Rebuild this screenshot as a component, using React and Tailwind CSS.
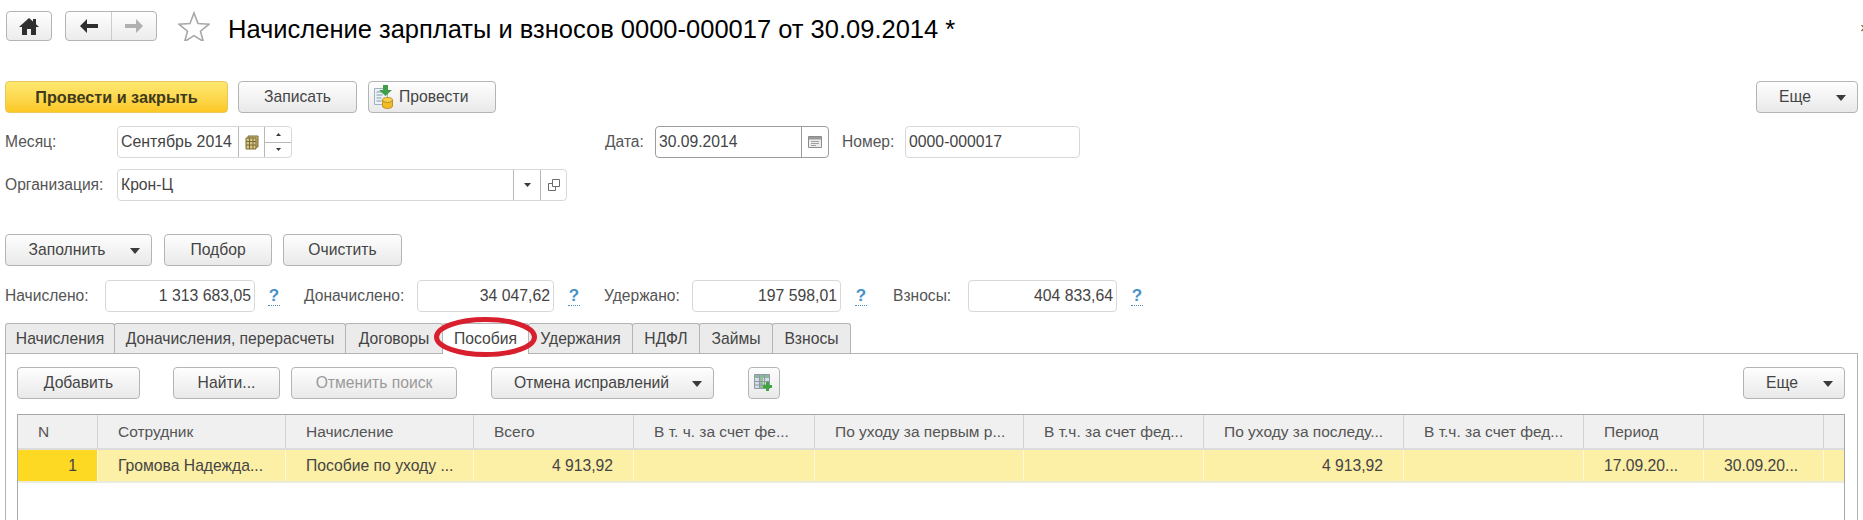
const textFont = "font-['Liberation_Sans',Arial,sans-serif]";

function Btn({ w, children, disabled, className = '' }) {
    return (
        <div
            className={
                'h-[32px] flex items-center justify-center shrink-0 rounded-[4px] border border-[#b4b4b4] bg-gradient-to-b from-[#fefefe] to-[#e9e9e9] text-[15.7px] ' +
                (disabled ? 'text-[#9a9a9a] ' : 'text-[#444444] ') +
                className
            }
            style={{ width: w }}
        >
            {children}
        </div>
    );
}

function Caret({ className = '' }) {
    return (
        <svg width="10" height="6" viewBox="0 0 10 6" className={className}>
            <path d="M0 0h10L5 6z" fill="#3a3a3a" />
        </svg>
    );
}

function MenuBtn({ w, label, textWidth }) {
    return (
        <Btn w={w} className="relative">
            <span style={{ marginRight: textWidth }}>{label}</span>
            <Caret className="absolute right-[11px] top-[13px]" />
        </Btn>
    );
}

function Label({ w, children }) {
    return (
        <div className="shrink-0 text-[15.6px] text-[#555555]" style={{ width: w }}>
            {children}
        </div>
    );
}

function Field({ w, children, right }) {
    return (
        <div
            className="h-[32px] flex items-center shrink-0 rounded-[4px] bg-white text-[15.8px] text-[#444444] border border-[#d8d8d8]"
            style={{ width: w }}
        >
            <div className={'flex-1 min-w-0 ' + (right ? 'text-right pr-[3px]' : 'pl-[3px]')}>{children}</div>
        </div>
    );
}

function FieldPart({ w, children, dark }) {
    return (
        <div
            className={'h-full flex items-center justify-center shrink-0 border-l ' + (dark ? 'border-[#9c9c9c]' : 'border-[#b8b8b8]')}
            style={{ width: w }}
        >
            {children}
        </div>
    );
}

function Help({ ml }) {
    return (
        <span
            className="shrink-0 w-[12px] text-center text-[17px] leading-[18px] font-bold text-[#4a90c8] border-b border-dotted border-[#4a90c8]"
            style={{ marginLeft: ml }}
        >
            ?
        </span>
    );
}

const tabs = [
    ['Начисления', 109],
    ['Доначисления, перерасчеты', 231],
    ['Договоры', 97],
    ['Пособия', 86],
    ['Удержания', 104],
    ['НДФЛ', 67],
    ['Займы', 73],
    ['Взносы', 78],
];

const columns = [
    { w: 80, title: 'N', value: '1', right: true },
    { w: 188, title: 'Сотрудник', value: 'Громова Надежда...' },
    { w: 188, title: 'Начисление', value: 'Пособие по уходу ...' },
    { w: 160, title: 'Всего', value: '4 913,92', right: true },
    { w: 181, title: 'В т. ч. за счет фе...' },
    { w: 209, title: 'По уходу за первым р...' },
    { w: 180, title: 'В т.ч. за счет фед...' },
    { w: 200, title: 'По уходу за последу...', value: '4 913,92', right: true },
    { w: 180, title: 'В т.ч. за счет фед...' },
    { w: 120, title: 'Период', value: '17.09.20...' },
    { w: 120, title: '', value: '30.09.20...' },
    { w: 22, title: 'Д', value: '' },
];

export default function App() {
    return (
        <div className={'relative w-[1863px] h-[520px] overflow-hidden bg-white ' + textFont}>
            {/* header */}
            <div className="flex items-start h-[81px] pl-[6px] pt-[11px]">
                <div className="w-[46px] h-[30px] flex items-center justify-center rounded-[4px] border border-[#b4b4b4] bg-gradient-to-b from-[#fefefe] to-[#ececec]">
                    <svg width="20" height="17" viewBox="0 0 20 17">
                        <path d="M10 0L0 9h3v8h5v-6h4v6h5V9h3l-3-2.7V1h-3v2.6z" fill="#2f2f2f" />
                    </svg>
                </div>
                <div className="ml-[13px] w-[92px] h-[30px] flex rounded-[4px] border border-[#b4b4b4] bg-gradient-to-b from-[#fefefe] to-[#ececec]">
                    <div className="w-[46px] flex items-center justify-center border-r border-[#cccccc]">
                        <svg width="18" height="14" viewBox="0 0 18 14">
                            <path d="M0 7l7-7v5h11v4H7v5z" fill="#2f2f2f" />
                        </svg>
                    </div>
                    <div className="flex-1 flex items-center justify-center">
                        <svg width="18" height="14" viewBox="0 0 18 14">
                            <path d="M18 7l-7-7v5H0v4h11v5z" fill="#b0b0b0" />
                        </svg>
                    </div>
                </div>
                <svg width="32" height="30" viewBox="0 0 32 30" className="ml-[21px]">
                    <path d="M16 2l4 10.5 11 .7-8.5 7 2.8 10.300L16 24.600 6.700 30.500l2.800-10.300-8.500-7 11-.7z" fill="#ffffff" stroke="#a8a8a8" strokeWidth="1.600" />
                </svg>
                <div className="ml-[18px] mt-[4px] text-[25.500px] leading-[28px] text-black whitespace-nowrap">
                    Начисление зарплаты и взносов 0000-000017 от 30.09.2014 *
                </div>
                <div className="ml-auto mt-[6px] w-[3px] overflow-hidden text-[15px] text-[#555555]">×</div>
            </div>

            {/* command bar */}
            <div className="flex items-center pl-[5px] pr-[5px]">
                <div className="w-[223px] h-[32px] flex items-center justify-center rounded-[4px] border border-[#e9c75a] bg-gradient-to-b from-[#fde96f] to-[#fcc821] text-[16.200px] font-bold text-[#3e3a1c]">
                    Провести и закрыть
                </div>
                <Btn w={119} className="ml-[10px]">Записать</Btn>
                <Btn w={128} className="ml-[11px] !justify-start pl-[5px] gap-[6px]">
                    <svg width="19" height="24" viewBox="0 0 19 24">
                        <path d="M.5 3.500h13v16H.5z" fill="#eef2f5" stroke="#9fb2c2" />
                        <path d="M2.500 7h7M2.500 10h6M2.500 13h5M2.500 16h5" stroke="#7f9ab0" />
                        <path d="M9 0h5v5h4l-6.500 6L5 5h4z" fill="#3f9f4a" />
                        <ellipse cx="13.500" cy="15" rx="5" ry="2.500" fill="#f5d04a" stroke="#c2922a" />
                        <path d="M8.500 15v6c0 1.400 2.200 2.500 5 2.500s5-1.100 5-2.500v-6c0 1.400-2.200 2.500-5 2.500s-5-1.100-5-2.500z" fill="#f0bb25" stroke="#c2922a" />
                    </svg>
                    <span>Провести</span>
                </Btn>
                <div className="ml-auto">
                    <MenuBtn w={102} label="Еще" textWidth={24} />
                </div>
            </div>

            {/* month and date */}
            <div className="flex items-center pl-[5px] mt-[13px]">
                <Label w={112}>Месяц:</Label>
                <div className="w-[175px] h-[32px] flex items-center shrink-0 rounded-[4px] bg-white text-[15.900px] text-[#444444] border border-[#d8d8d8]">
                    <div className="flex-1 pl-[3px] whitespace-nowrap">Сентябрь 2014</div>
                    <FieldPart w={26}>
                        <svg width="14" height="15" viewBox="0 0 14 15">
                            <path d="M3 1h10v11H3z" fill="#c9b77a" stroke="#7d6a2e" />
                            <path d="M1 3h10v11H1z" fill="#d6c68d" stroke="#7d6a2e" />
                            <path d="M1 6.500h10M1 10h10M4.500 3v11M8 3v11" stroke="#7d6a2e" />
                        </svg>
                    </FieldPart>
                    <div className="w-[27px] h-full flex flex-col border-l border-[#b8b8b8]">
                        <div className="flex-1 flex items-center justify-center border-b border-[#b8b8b8]">
                            <svg width="5" height="3" viewBox="0 0 5 3"><path d="M0 3h5L2.500 0z" fill="#3a3a3a" /></svg>
                        </div>
                        <div className="flex-1 flex items-center justify-center">
                            <svg width="5" height="3" viewBox="0 0 5 3"><path d="M0 0h5L2.500 3z" fill="#3a3a3a" /></svg>
                        </div>
                    </div>
                </div>
                <div className="ml-[313px]">
                    <Label w={50}>Дата:</Label>
                </div>
                <div className="w-[174px] h-[32px] flex items-center shrink-0 rounded-[4px] bg-white text-[15.700px] text-[#444444] border border-[#9c9c9c]">
                    <div className="flex-1 pl-[3px]">30.09.2014</div>
                    <FieldPart w={27} dark>
                        <svg width="14" height="12" viewBox="0 0 14 12">
                            <path d="M.5.500h13v11H.5z" fill="#ececec" stroke="#8c8c8c" />
                            <path d="M1 1h12v2.500H1z" fill="#9a9a9a" />
                            <path d="M3 5.500h8M3 7.500h8M3 9.500h5" stroke="#a0a0a0" />
                        </svg>
                    </FieldPart>
                </div>
                <div className="ml-[13px]">
                    <Label w={63}>Номер:</Label>
                </div>
                <Field w={175}>0000-000017</Field>
            </div>

            {/* organization */}
            <div className="flex items-center pl-[5px] mt-[11px]">
                <Label w={112}>Организация:</Label>
                <div className="w-[450px] h-[32px] flex items-center shrink-0 rounded-[4px] bg-white text-[15.700px] text-[#444444] border border-[#d8d8d8]">
                    <div className="flex-1 pl-[3px]">Крон-Ц</div>
                    <FieldPart w={27}>
                        <svg width="7" height="4" viewBox="0 0 7 4"><path d="M0 0h7L3.500 4z" fill="#3a3a3a" /></svg>
                    </FieldPart>
                    <FieldPart w={26}>
                        <svg width="12" height="12" viewBox="0 0 12 12" fill="none" stroke="#6a6a6a">
                            <path d="M4.500.500h7v7h-7z" />
                            <path d="M4.500 4.500H.500v7h7V7.500" />
                        </svg>
                    </FieldPart>
                </div>
            </div>

            {/* fill buttons */}
            <div className="flex items-center pl-[5px] mt-[33px]">
                <MenuBtn w={147} label="Заполнить" textWidth={23} />
                <Btn w={108} className="ml-[12px]">Подбор</Btn>
                <Btn w={119} className="ml-[11px]">Очистить</Btn>
            </div>

            {/* totals */}
            <div className="flex items-center pl-[5px] mt-[14px]">
                <Label w={100}>Начислено:</Label>
                <Field w={150} right>1 313 683,05</Field>
                <Help ml={13} />
                <div className="ml-[24px]"><Label w={113}>Доначислено:</Label></div>
                <Field w={137} right>34 047,62</Field>
                <Help ml={14} />
                <div className="ml-[24px]"><Label w={88}>Удержано:</Label></div>
                <Field w={149} right>197 598,01</Field>
                <Help ml={14} />
                <div className="ml-[26px]"><Label w={75}>Взносы:</Label></div>
                <Field w={149} right>404 833,64</Field>
                <Help ml={14} />
            </div>

            {/* tabs */}
            <div className="flex pl-[5px] mt-[11px] h-[30px]">
                {tabs.map(([name, w], i) => (
                    <div
                        key={name}
                        className={
                            'shrink-0 flex items-center justify-center rounded-t-[3px] border border-b-0 border-[#b4b4b4] -mr-px text-[15.700px] text-[#444444] ' +
                            (i === 3 ? 'relative z-10 h-[31px] bg-white' : 'bg-[#ebebeb]')
                        }
                        style={{ width: w + 1 }}
                    >
                        {name}
                    </div>
                ))}
            </div>

            {/* panel */}
            <div className="ml-[5px] mr-[5px] h-[200px] border border-[#b4b4b4] pl-[11px] pr-[12px] pt-[13px]">
                <div className="flex items-center">
                    <Btn w={123}>Добавить</Btn>
                    <Btn w={107} className="ml-[33px]">Найти...</Btn>
                    <Btn w={166} disabled className="ml-[11px]">Отменить поиск</Btn>
                    <div className="ml-[34px]">
                        <MenuBtn w={223} label="Отмена исправлений" textWidth={22} />
                    </div>
                    <Btn w={32} className="ml-[34px]">
                        <svg width="20" height="21" viewBox="0 0 20 21">
                            <path d="M.5 1.500h15v14H.5z" fill="#d5dde4" stroke="#8c9aa6" />
                            <path d="M1 2h14v3H1z" fill="#8fb7a0" />
                            <path d="M5 5h4v10H5z" fill="#98c08e" />
                            <path d="M5.500 2v13M10.500 2v13M1 8.500h14M1 12h14" stroke="#8c9aa6" />
                            <path d="M12 9h3v3h3v3h-3v3h-3v-3H9v-3h3z" fill="#3fa63f" />
                        </svg>
                    </Btn>
                    <div className="ml-auto">
                        <MenuBtn w={102} label="Еще" textWidth={24} />
                    </div>
                </div>

                {/* table */}
                <div className="mt-[15px] h-[200px] border-x border-t border-[#a8a8a8] overflow-hidden">
                    <div className="flex h-[35px] bg-[#f0f0f0] border-b-2 border-[#dcdcdc]">
                        {columns.map((c, i) => (
                            <div
                                key={i}
                                className={
                                    'shrink-0 h-full flex items-center overflow-hidden whitespace-nowrap pl-[20px] text-[15.500px] text-[#555555] ' +
                                    (i < columns.length - 1 ? 'border-r border-[#d2d2d2]' : '')
                                }
                                style={{ width: c.w }}
                            >
                                {c.title}
                            </div>
                        ))}
                    </div>
                    <div className="flex h-[33px] bg-[#fcefa6] border-b-2 border-[#ececdc]">
                        {columns.map((c, i) => (
                            <div
                                key={i}
                                className={
                                    'shrink-0 h-full flex items-center overflow-hidden whitespace-nowrap text-[15.700px] text-[#444444] ' +
                                    (c.right ? 'justify-end pr-[20px] ' : 'pl-[20px] ') +
                                    (i === 0 ? 'bg-[#fdd923] ' : '') +
                                    (i < columns.length - 1 ? 'border-r border-[#fff9dc]' : '')
                                }
                                style={{ width: c.w }}
                            >
                                {c.value}
                            </div>
                        ))}
                    </div>
                </div>
            </div>

            {/* red hand-drawn mark around the tab */}
            <svg width="110" height="48" viewBox="0 0 110 48" className="absolute left-[430px] top-[313px] z-20">
                <ellipse cx="55.500" cy="24" rx="49" ry="17.500" fill="none" stroke="#d81f2e" strokeWidth="5" />
            </svg>
        </div>
    );
}
